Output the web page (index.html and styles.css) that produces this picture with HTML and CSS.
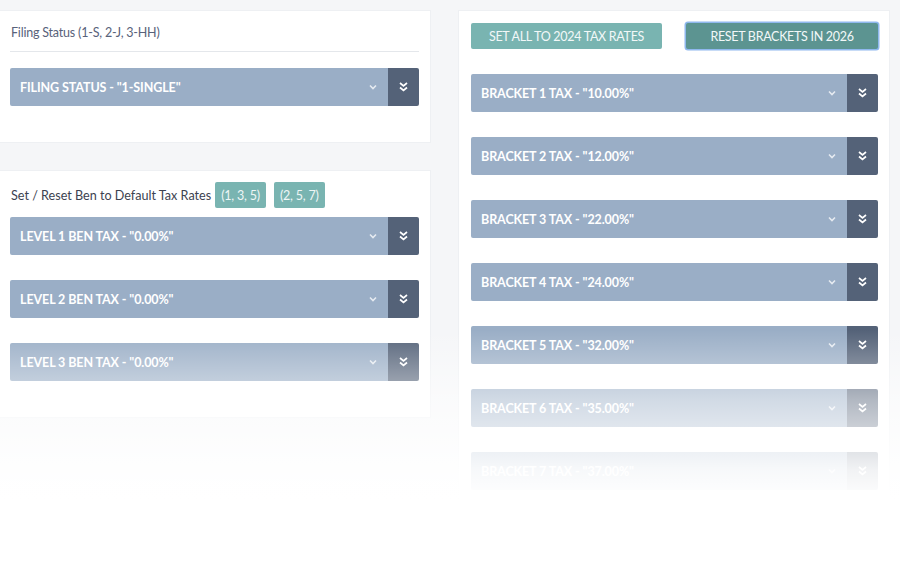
FILE: index.html
```html
<!DOCTYPE html>
<html>
<head>
  <meta charset="utf-8">
  <title>Tax Settings</title>
  <link rel="stylesheet" href="styles.css">
</head>
<body>
  <div class="page">
    <div class="left-col">
      <div class="card filing-card">
        <div class="field-label">Filing Status (1-S, 2-J, 3-HH)</div>
        <hr class="divider">
        <div class="select-row">
          <div class="select-main">
            <span>FILING STATUS - "1-SINGLE"</span>
            <svg class="caret" width="8" height="6" viewBox="0 0 8 6"><path d="M1 1.5 L4 4.5 L7 1.5" fill="none" stroke="currentColor" stroke-width="1.6"/></svg>
          </div>
          <div class="select-append">
            <svg width="9" height="10" viewBox="0 0 9 10"><path d="M1 1 L4.5 4 L8 1 M1 5.5 L4.5 8.5 L8 5.5" fill="none" stroke="currentColor" stroke-width="1.7"/></svg>
          </div>
        </div>
      </div>

      <div class="card ben-card">
        <div class="ben-head">
          <span>Set / Reset Ben to Default Tax Rates</span>
          <button class="badge-btn">(1, 3, 5)</button>
          <button class="badge-btn">(2, 5, 7)</button>
        </div>
        <div class="select-row">
          <div class="select-main">
            <span>LEVEL 1 BEN TAX - "0.00%"</span>
            <svg class="caret" width="8" height="6" viewBox="0 0 8 6"><path d="M1 1.5 L4 4.5 L7 1.5" fill="none" stroke="currentColor" stroke-width="1.6"/></svg>
          </div>
          <div class="select-append">
            <svg width="9" height="10" viewBox="0 0 9 10"><path d="M1 1 L4.5 4 L8 1 M1 5.5 L4.5 8.5 L8 5.5" fill="none" stroke="currentColor" stroke-width="1.7"/></svg>
          </div>
        </div>
        <div class="select-row">
          <div class="select-main">
            <span>LEVEL 2 BEN TAX - "0.00%"</span>
            <svg class="caret" width="8" height="6" viewBox="0 0 8 6"><path d="M1 1.5 L4 4.5 L7 1.5" fill="none" stroke="currentColor" stroke-width="1.6"/></svg>
          </div>
          <div class="select-append">
            <svg width="9" height="10" viewBox="0 0 9 10"><path d="M1 1 L4.5 4 L8 1 M1 5.5 L4.5 8.5 L8 5.5" fill="none" stroke="currentColor" stroke-width="1.7"/></svg>
          </div>
        </div>
        <div class="select-row">
          <div class="select-main">
            <span>LEVEL 3 BEN TAX - "0.00%"</span>
            <svg class="caret" width="8" height="6" viewBox="0 0 8 6"><path d="M1 1.5 L4 4.5 L7 1.5" fill="none" stroke="currentColor" stroke-width="1.6"/></svg>
          </div>
          <div class="select-append">
            <svg width="9" height="10" viewBox="0 0 9 10"><path d="M1 1 L4.5 4 L8 1 M1 5.5 L4.5 8.5 L8 5.5" fill="none" stroke="currentColor" stroke-width="1.7"/></svg>
          </div>
        </div>
      </div>
    </div>

    <div class="right-col">
      <div class="card bracket-card">
        <div class="button-row">
          <button class="teal-btn">SET ALL TO 2024 TAX RATES</button>
          <button class="teal-btn dark focused">RESET BRACKETS IN 2026</button>
        </div>
        <div class="select-row">
          <div class="select-main"><span>BRACKET 1 TAX - "10.00%"</span>
            <svg class="caret" width="8" height="6" viewBox="0 0 8 6"><path d="M1 1.5 L4 4.5 L7 1.5" fill="none" stroke="currentColor" stroke-width="1.6"/></svg></div>
          <div class="select-append"><svg width="9" height="10" viewBox="0 0 9 10"><path d="M1 1 L4.5 4 L8 1 M1 5.5 L4.5 8.5 L8 5.5" fill="none" stroke="currentColor" stroke-width="1.7"/></svg></div>
        </div>
        <div class="select-row">
          <div class="select-main"><span>BRACKET 2 TAX - "12.00%"</span>
            <svg class="caret" width="8" height="6" viewBox="0 0 8 6"><path d="M1 1.5 L4 4.5 L7 1.5" fill="none" stroke="currentColor" stroke-width="1.6"/></svg></div>
          <div class="select-append"><svg width="9" height="10" viewBox="0 0 9 10"><path d="M1 1 L4.5 4 L8 1 M1 5.5 L4.5 8.5 L8 5.5" fill="none" stroke="currentColor" stroke-width="1.7"/></svg></div>
        </div>
        <div class="select-row">
          <div class="select-main"><span>BRACKET 3 TAX - "22.00%"</span>
            <svg class="caret" width="8" height="6" viewBox="0 0 8 6"><path d="M1 1.5 L4 4.5 L7 1.5" fill="none" stroke="currentColor" stroke-width="1.6"/></svg></div>
          <div class="select-append"><svg width="9" height="10" viewBox="0 0 9 10"><path d="M1 1 L4.5 4 L8 1 M1 5.5 L4.5 8.5 L8 5.5" fill="none" stroke="currentColor" stroke-width="1.7"/></svg></div>
        </div>
        <div class="select-row">
          <div class="select-main"><span>BRACKET 4 TAX - "24.00%"</span>
            <svg class="caret" width="8" height="6" viewBox="0 0 8 6"><path d="M1 1.5 L4 4.5 L7 1.5" fill="none" stroke="currentColor" stroke-width="1.6"/></svg></div>
          <div class="select-append"><svg width="9" height="10" viewBox="0 0 9 10"><path d="M1 1 L4.5 4 L8 1 M1 5.5 L4.5 8.5 L8 5.5" fill="none" stroke="currentColor" stroke-width="1.7"/></svg></div>
        </div>
        <div class="select-row">
          <div class="select-main"><span>BRACKET 5 TAX - "32.00%"</span>
            <svg class="caret" width="8" height="6" viewBox="0 0 8 6"><path d="M1 1.5 L4 4.5 L7 1.5" fill="none" stroke="currentColor" stroke-width="1.6"/></svg></div>
          <div class="select-append"><svg width="9" height="10" viewBox="0 0 9 10"><path d="M1 1 L4.5 4 L8 1 M1 5.5 L4.5 8.5 L8 5.5" fill="none" stroke="currentColor" stroke-width="1.7"/></svg></div>
        </div>
        <div class="select-row">
          <div class="select-main"><span>BRACKET 6 TAX - "35.00%"</span>
            <svg class="caret" width="8" height="6" viewBox="0 0 8 6"><path d="M1 1.5 L4 4.5 L7 1.5" fill="none" stroke="currentColor" stroke-width="1.6"/></svg></div>
          <div class="select-append"><svg width="9" height="10" viewBox="0 0 9 10"><path d="M1 1 L4.5 4 L8 1 M1 5.5 L4.5 8.5 L8 5.5" fill="none" stroke="currentColor" stroke-width="1.7"/></svg></div>
        </div>
        <div class="select-row">
          <div class="select-main"><span>BRACKET 7 TAX - "37.00%"</span>
            <svg class="caret" width="8" height="6" viewBox="0 0 8 6"><path d="M1 1.5 L4 4.5 L7 1.5" fill="none" stroke="currentColor" stroke-width="1.6"/></svg></div>
          <div class="select-append"><svg width="9" height="10" viewBox="0 0 9 10"><path d="M1 1 L4.5 4 L8 1 M1 5.5 L4.5 8.5 L8 5.5" fill="none" stroke="currentColor" stroke-width="1.7"/></svg></div>
        </div>
      </div>
    </div>
  </div>

  <div class="fade-out"></div>
</body>
</html>
```

FILE: styles.css
```css
body {
  margin: 0;
  padding: 0;
  background: #f5f6f8;
  font-family: Lato, "Open Sans", sans-serif;
  color: #4a5262;
  overflow: hidden;
  height: 587px;
}

.page {
  display: flex;
  gap: 27px;
  padding: 10px 10px 0 0;
  align-items: flex-start;
}

.left-col {
  width: 431px;
  display: flex;
  flex-direction: column;
  gap: 27px;
}

.right-col {
  width: 432px;
}

.card {
  background: #fff;
  border: 1px solid #eef0f3;
  border-left: none;
  box-sizing: border-box;
}

.filing-card {
  height: 133px;
  padding: 14px 11px 0 10px;
}

.field-label {
  font-size: 12.5px;
  letter-spacing: -0.2px;
  color: #58627a;
  padding-left: 1px;
  line-height: 16px;
}

.divider {
  border: none;
  border-top: 1px solid #e4e7eb;
  margin: 10px 0 16px 0;
}

.ben-card {
  height: 248px;
  padding: 11px 11px 0 10px;
}

.ben-head {
  display: flex;
  align-items: center;
  gap: 8px;
  font-size: 12.6px;
  color: #3c4250;
  padding-left: 1px;
  margin-bottom: 9px;
}

.ben-head span {
  margin-right: -4px;
}

.badge-btn {
  background: #79b4b1;
  color: #eef6f6;
  border: none;
  border-radius: 2px;
  height: 26px;
  padding: 0 6px;
  font-family: Lato, sans-serif;
  font-size: 12.5px;
  letter-spacing: -0.2px;
}

.bracket-card {
  border-left: 1px solid #eef0f3;
  height: 490px;
  padding: 12px 11px 0 12px;
}

.button-row {
  display: flex;
  justify-content: space-between;
  margin-bottom: 25px;
}

.teal-btn {
  background: #79b4b1;
  color: #f2f8f8;
  border: none;
  border-radius: 2px;
  height: 26px;
  width: 191px;
  font-family: Lato, sans-serif;
  font-size: 12.5px;
  letter-spacing: -0.3px;
}

.teal-btn.dark {
  background: #5c9491;
  width: 192px;
}

.teal-btn.focused {
  box-shadow: 0 0 0 1.5px #8fb8ee;
}

.select-row {
  display: flex;
  height: 38px;
  margin-bottom: 25px;
  border-radius: 2px;
  overflow: hidden;
}

.select-main {
  flex: 1;
  background: #9aaec6;
  color: #fff;
  display: flex;
  align-items: center;
  justify-content: space-between;
  padding: 0 10px 0 10px;
  font-size: 12.5px;
  letter-spacing: -0.1px;
  font-weight: 700;
}

.caret {
  color: rgba(255, 255, 255, 0.75);
  margin-right: 1px;
}

.select-append {
  width: 31px;
  background: #546278;
  color: #fff;
  display: flex;
  align-items: center;
  justify-content: center;
}

.fade-out {
  position: absolute;
  left: 0;
  top: 0;
  width: 900px;
  height: 587px;
  pointer-events: none;
  background: linear-gradient(to bottom,
    rgba(255, 255, 255, 0) 330px,
    rgba(255, 255, 255, 0.55) 400px,
    rgba(255, 255, 255, 0.92) 470px,
    #fff 500px);
}
```
